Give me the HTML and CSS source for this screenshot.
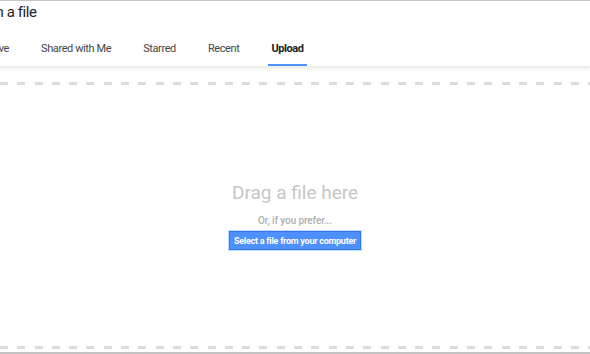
FILE: index.html
```html
<!DOCTYPE html>
<html lang="en">
  <head>
    <meta charset="UTF-8" />
    <title>Open a file</title>
    <link rel="stylesheet" href="styles.css">
  </head>
  <body>
    <div class="picker">
      <div class="header">
        <h1 class="title">Open a file</h1>
      </div>

      <div class="tabs">
        <div class="tab">My Drive</div>
        <div class="tab">Shared with Me</div>
        <div class="tab">Starred</div>
        <div class="tab">Recent</div>
        <div class="tab active">Upload</div>
      </div>

      <div class="dropzone">
        <div class="dash-line"></div>
        <div class="drop-body">
          <div class="drop-title">Drag a file here</div>
          <div class="drop-sub">Or, if you prefer...</div>
          <button class="select-button">Select a file from your computer</button>
        </div>
        <div class="dash-line"></div>
      </div>
    </div>
  </body>
</html>
```

FILE: styles.css
```css
* {
  margin: 0;
  padding: 0;
  box-sizing: border-box;
}

body {
  width: 590px;
  height: 354px;
  overflow: hidden;
  font-family: Roboto, "Liberation Sans", Arial, sans-serif;
  background: #fff;
  color: #222;
}

.picker {
  height: 354px;
  display: flex;
  flex-direction: column;
  border-top: 1px solid #c4c4c4;
  border-bottom: 2px solid #c4c4c4;
}

.header {
  height: 37px;
  padding-top: 1px;
}

.title {
  font-size: 15px;
  font-weight: 400;
  letter-spacing: -0.4px;
  color: #222;
  margin-left: -30px;
  line-height: 20px;
}

.tabs {
  height: 29px;
  display: flex;
  align-items: stretch;
  margin-left: -46px;
  position: relative;
  box-shadow: 0 2px 3px rgba(0, 0, 0, 0.08);
  border-bottom: 1px solid #ececec;
}

.tab {
  font-size: 11px;
  letter-spacing: -0.4px;
  color: #444;
  margin: 0 13px;
  padding: 0 3px 6px;
  display: flex;
  align-items: center;
  border-bottom: 2px solid transparent;
  white-space: nowrap;
}

.tab.active {
  font-weight: 700;
  color: #222;
  border-bottom-color: #4d90fe;
}

.dropzone {
  flex: 1;
  display: flex;
  flex-direction: column;
  padding-top: 15px;
  padding-bottom: 3px;
}

.dash-line {
  height: 3px;
  background: repeating-linear-gradient(to right, #dcdcdc 0 8px, transparent 8px 17.3px);
}

.drop-body {
  flex: 1;
  display: flex;
  flex-direction: column;
  align-items: center;
  justify-content: center;
}

.drop-title {
  font-size: 19px;
  color: #c6c6c6;
  line-height: 24px;
  margin-bottom: 9px;
}

.drop-sub {
  font-size: 10px;
  font-weight: 500;
  letter-spacing: -0.1px;
  color: #b0b0b0;
  line-height: 14px;
  margin-bottom: 3px;
}

.select-button {
  font-family: Roboto, "Liberation Sans", Arial, sans-serif;
  font-size: 9px;
  font-weight: 700;
  letter-spacing: -0.25px;
  color: #fff;
  background: #4d90fe;
  border: 1px solid #3079ed;
  box-shadow: 0 0 0 1px #c2d8fc;
  padding: 0 4px;
  height: 19px;
  cursor: pointer;
}
```
